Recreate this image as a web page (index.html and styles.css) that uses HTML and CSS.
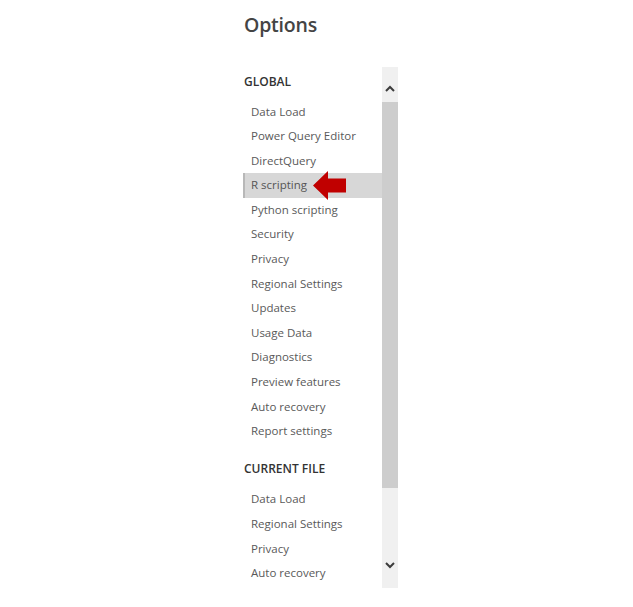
FILE: index.html
```html
<!DOCTYPE html>
<html>
<head>
<meta charset="utf-8">
<link rel="stylesheet" href="styles.css">
</head>
<body>
<div class="page">
  <h1 class="title">Options</h1>
  <div class="panel">
    <div class="list">
      <div class="header">GLOBAL</div>
      <div class="item">Data Load</div>
      <div class="item">Power Query Editor</div>
      <div class="item">DirectQuery</div>
      <div class="item selected">R scripting
        <svg class="pointer" width="34" height="30" viewBox="0 0 34 30"><polygon points="0,14.5 15,0 15,7.5 33,7.5 33,21.5 15,21.5 15,29" fill="#c00000"/></svg>
      </div>
      <div class="item">Python scripting</div>
      <div class="item">Security</div>
      <div class="item">Privacy</div>
      <div class="item">Regional Settings</div>
      <div class="item">Updates</div>
      <div class="item">Usage Data</div>
      <div class="item">Diagnostics</div>
      <div class="item">Preview features</div>
      <div class="item">Auto recovery</div>
      <div class="item">Report settings</div>
      <div class="header second">CURRENT FILE</div>
      <div class="item">Data Load</div>
      <div class="item">Regional Settings</div>
      <div class="item">Privacy</div>
      <div class="item">Auto recovery</div>
    </div>
    <div class="scrollbar">
      <div class="btn up"><svg width="10" height="7" viewBox="0 0 10 7"><polyline points="1,6 5,2 9,6" fill="none" stroke="#3c3c3c" stroke-width="2"/></svg></div>
      <div class="thumb"></div>
      <div class="rest"><svg width="10" height="7" viewBox="0 0 10 7"><polyline points="1,1 5,5 9,1" fill="none" stroke="#3c3c3c" stroke-width="2"/></svg></div>
    </div>
  </div>
</div>
</body>
</html>
```
FILE: styles.css
```css
html, body {
  margin: 0;
  padding: 0;
  background: #ffffff;
}
.page {
  padding-left: 244px;
  font-family: "Open Sans", "Noto Sans", "Liberation Sans", sans-serif;
}
.title {
  margin: 0;
  padding-top: 12px;
  height: 67px;
  box-sizing: border-box;
  font-size: 19.5px;
  line-height: 26px;
  font-weight: 600;
  color: #444444;
  letter-spacing: -0.2px;
}
.panel {
  display: flex;
  height: 521px;
}
.list {
  width: 138px;
}
.header {
  height: 30px;
  line-height: 30px;
  margin-bottom: 2.5px;
  font-size: 12px;
  font-weight: 600;
  color: #333333;
}
.header.second {
  margin-top: 10.5px;
  margin-bottom: 3px;
}
.item {
  position: relative;
  height: 24.6px;
  line-height: 24.6px;
  padding-left: 7px;
  font-size: 11.5px;
  color: #595959;
  box-sizing: border-box;
  white-space: nowrap;
}
.item.selected {
  background: #d7d7d7;
  border-left: 2px solid #b8b8b8;
  margin-left: -1px;
  padding-left: 6px;
  color: #555555;
}
.pointer {
  position: absolute;
  left: 68px;
  top: -2px;
}
.scrollbar {
  width: 16px;
  display: flex;
  flex-direction: column;
  background: #f0f0f0;
}
.btn.up {
  height: 35px;
  display: flex;
  justify-content: center;
  padding-top: 18px;
  box-sizing: border-box;
}
.thumb {
  height: 386px;
  background: #cdcdcd;
}
.rest {
  flex: 1;
  display: flex;
  justify-content: center;
  padding-top: 74px;
  box-sizing: border-box;
}
```
